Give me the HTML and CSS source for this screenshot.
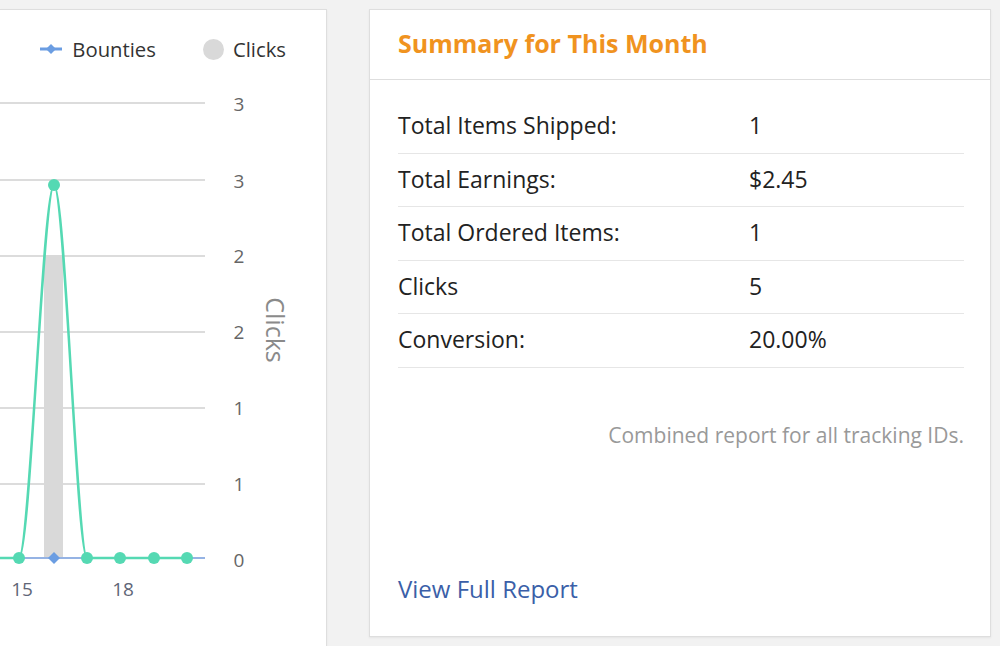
FILE: index.html
```html
<!DOCTYPE html>
<html>
<head>
<meta charset="utf-8">
<link rel="stylesheet" href="styles.css">
</head>
<body>
<div class="page">
  <section class="card chart-card">
    <div class="legend">
      <span class="legend-item">
        <svg class="legend-icon" width="24" height="12" viewBox="0 0 24 12"><line x1="1" y1="6" x2="23" y2="6" stroke="#6b9de2" stroke-width="3"/><path d="M12 1 L17 6 L12 11 L7 6 Z" fill="#6b9de2"/></svg>
        Bounties
      </span>
      <span class="legend-item">
        <span class="legend-dot"></span>
        Clicks
      </span>
    </div>
    <svg class="chart" width="325" height="558" viewBox="0 88 325 558">
      <g stroke="#dcdcdc" stroke-width="2">
        <line x1="0" y1="103" x2="205" y2="103"/>
        <line x1="0" y1="180" x2="205" y2="180"/>
        <line x1="0" y1="256" x2="205" y2="256"/>
        <line x1="0" y1="332" x2="205" y2="332"/>
        <line x1="0" y1="408" x2="205" y2="408"/>
        <line x1="0" y1="484" x2="205" y2="484"/>
      </g>
      <rect x="44" y="255" width="19" height="303" fill="#d9d9d9"/>
      <line x1="0" y1="558" x2="205" y2="558" stroke="#a9bde0" stroke-width="2"/>
      <line x1="0" y1="558" x2="205" y2="558" stroke="#8fb0e6" stroke-width="1.5"/>
      <path d="M0 558 L19 558 C30 558 43 185 54 185 C65 185 77 558 87 558 L187 558" fill="none" stroke="#55d9b3" stroke-width="2.5"/>
      <g fill="#55d9b3">
        <circle cx="19" cy="558" r="6"/>
        <circle cx="54" cy="185" r="6"/>
        <circle cx="87" cy="558" r="6"/>
        <circle cx="120" cy="558" r="6"/>
        <circle cx="154" cy="558" r="6"/>
        <circle cx="187" cy="558" r="6"/>
      </g>
      <path d="M54 552 L60 558 L54 564 L48 558 Z" fill="#6b9de2"/>
      <g class="ytick" text-anchor="middle">
        <text x="239" y="111">3</text>
        <text x="239" y="188">3</text>
        <text x="239" y="263">2</text>
        <text x="239" y="339">2</text>
        <text x="239" y="415">1</text>
        <text x="239" y="491">1</text>
        <text x="239" y="567">0</text>
      </g>
      <g class="xtick" text-anchor="middle">
        <text x="22" y="596">15</text>
        <text x="123" y="596">18</text>
      </g>
      <text class="axis-title" x="258" y="330" text-anchor="middle" transform="rotate(90 258 330)" dy="-8">Clicks</text>
    </svg>
  </section>

  <section class="card summary-card">
    <header class="summary-head">Summary for This Month</header>
    <div class="summary-body">
      <div class="rows">
        <div class="row"><span class="label">Total Items Shipped:</span><span class="value">1</span></div>
        <div class="row"><span class="label">Total Earnings:</span><span class="value">$2.45</span></div>
        <div class="row"><span class="label">Total Ordered Items:</span><span class="value">1</span></div>
        <div class="row"><span class="label">Clicks</span><span class="value">5</span></div>
        <div class="row"><span class="label">Conversion:</span><span class="value">20.00%</span></div>
      </div>
      <p class="note">Combined report for all tracking IDs.</p>
      <a class="report-link" href="#">View Full Report</a>
    </div>
  </section>
</div>
</body>
</html>
```

FILE: styles.css
```css
html, body {
  margin: 0;
  padding: 0;
}
body {
  background: #f2f2f2;
  font-family: "Open Sans", Lato, "Liberation Sans", sans-serif;
  width: 1000px;
  height: 646px;
  overflow: hidden;
}
.page {
  display: flex;
  align-items: flex-start;
  gap: 42px;
  padding-top: 9px;
}
.card {
  background: #fff;
  border: 1px solid #dedede;
  box-shadow: 0 1px 2px rgba(0,0,0,0.06);
  box-sizing: border-box;
}
.chart-card {
  width: 327px;
  height: 660px;
  border-left: none;
  display: flex;
  flex-direction: column;
}
.legend {
  height: 78px;
  display: flex;
  align-items: center;
  justify-content: flex-end;
  gap: 47px;
  padding-right: 40px;
  font-size: 20.3px;
  color: #333;
}
.legend-item {
  display: flex;
  align-items: center;
  gap: 9px;
}
.legend-icon {
  display: block;
}
.legend-dot {
  width: 21px;
  height: 21px;
  border-radius: 50%;
  background: #d9d9d9;
  display: inline-block;
}
.chart {
  display: block;
}
.ytick text, .xtick text {
  font-family: "Open Sans", Lato, sans-serif;
  font-size: 19px;
  fill: #666;
}
.xtick text {
  fill: #5f6677;
}
.axis-title {
  font-family: "Open Sans", Lato, sans-serif;
  font-size: 25px;
  fill: #8a8a8a;
}
.summary-card {
  width: 622px;
  height: 628px;
  display: flex;
  flex-direction: column;
}
.summary-head {
  height: 66px;
  padding-bottom: 3px;
  border-bottom: 1px solid #dedede;
  display: flex;
  align-items: center;
  padding-left: 28px;
  font-size: 25px;
  font-weight: 700;
  color: #f0931f;
}
.summary-body {
  flex: 1;
  display: flex;
  flex-direction: column;
  padding: 20px 26px 31px 28px;
}
.rows {
  display: flex;
  flex-direction: column;
}
.row {
  height: 50.5px;
  padding-bottom: 2px;
  border-bottom: 1px solid #e6e6e6;
  display: flex;
  align-items: center;
  font-size: 23px;
  color: #222;
}
.label {
  width: 351px;
}
.note {
  margin: 53px 0 0;
  text-align: right;
  font-size: 21px;
  color: #999;
}
.report-link {
  margin-top: auto;
  font-size: 24px;
  color: #3b5fa8;
  text-decoration: none;
}
```
